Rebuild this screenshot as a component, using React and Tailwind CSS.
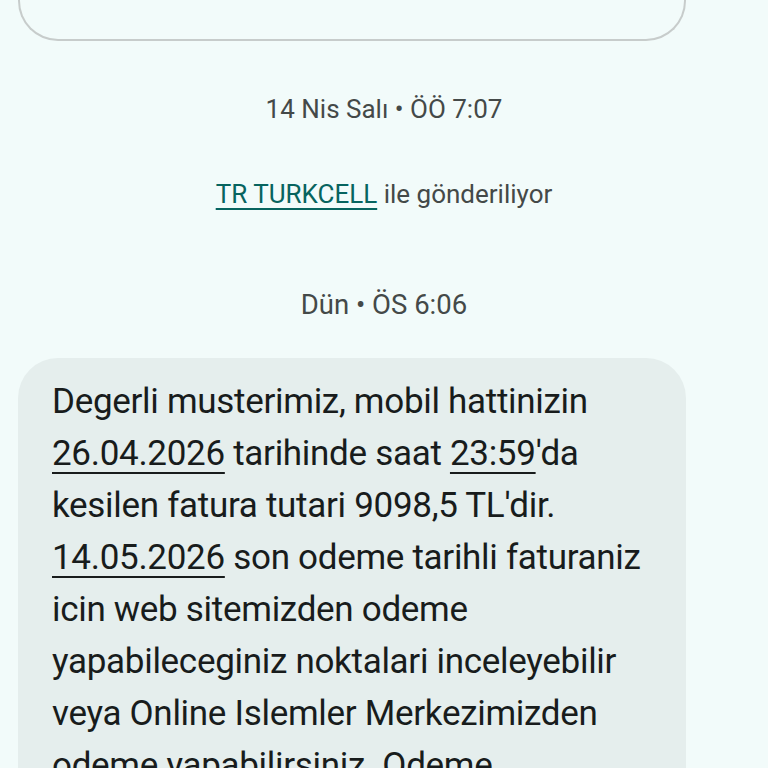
export default function App() {
  const font = { fontFamily: "Roboto, 'Noto Sans', sans-serif" };
  const u = "underline decoration-[2px] underline-offset-[7px]";
  return (
    <div className="w-[768px] h-[768px] overflow-hidden bg-[#f2fbfa]" style={font}>
      <div className="-mt-[60px] ml-[18px] w-[668px] h-[101px] rounded-b-[40px] border-2 border-[#c7cccb] border-t-0" />
      <div className="mt-[53px] text-center text-[26px] leading-[30px] text-[#444948]">14 Nis Salı • ÖÖ 7:07</div>
      <div className="mt-[55px] text-center text-[26px] leading-[30px] text-[#444948]">
        <span className="text-[#07645f] underline decoration-2 underline-offset-[5px]">TR TURKCELL</span> ile gönderiliyor
      </div>
      <div className="mt-[81px] text-center text-[27.5px] leading-[30px] text-[#444948]">Dün • ÖS 6:06</div>
      <div className="mt-[38px] ml-[18px] w-[668px] rounded-[40px] bg-[#e5eeed] pl-[34px] pr-[20px] pt-[18px] pb-[40px] text-[35px] leading-[52px] text-[#181c1c] tracking-[-0.3px] whitespace-nowrap">
        <div>Degerli musterimiz, mobil hattinizin</div>
        <div><span className={u}>26.04.2026</span> tarihinde saat <span className={u}>23:59</span>'da</div>
        <div>kesilen fatura tutari 9098,5 TL'dir.</div>
        <div><span className={u}>14.05.2026</span> son odeme tarihli faturaniz</div>
        <div>icin web sitemizden odeme</div>
        <div>yapabileceginiz noktalari inceleyebilir</div>
        <div>veya Online Islemler Merkezimizden</div>
        <div>odeme yapabilirsiniz. Odeme</div>
      </div>
    </div>
  );
}
